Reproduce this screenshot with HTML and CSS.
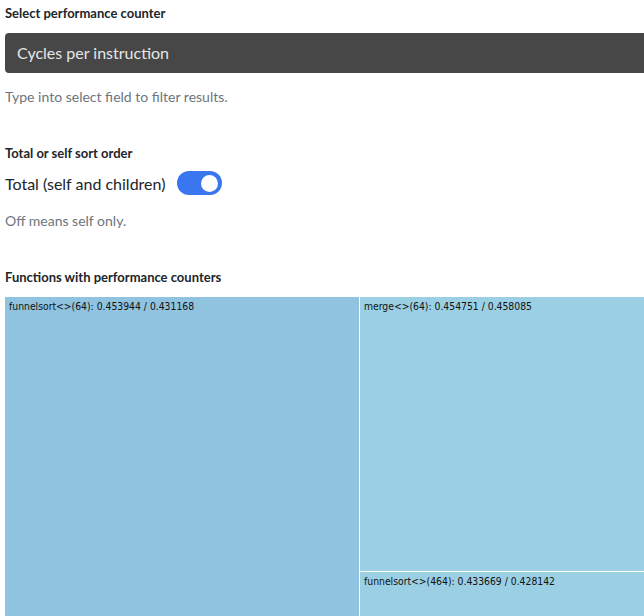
FILE: index.html
```html
<!DOCTYPE html>
<html>
<head>
<meta charset="utf-8">
<link rel="stylesheet" href="styles.css">
</head>
<body>
<div class="page">
  <div class="field">
    <div class="label">Select performance counter</div>
    <div class="select">Cycles per instruction</div>
    <div class="help">Type into select field to filter results.</div>
  </div>
  <div class="field sort">
    <div class="label">Total or self sort order</div>
    <div class="toggle-row">
      <span class="toggle-text">Total (self and children)</span>
      <span class="switch"><span class="knob"></span></span>
    </div>
    <div class="help">Off means self only.</div>
  </div>
  <div class="label funcs">Functions with performance counters</div>
  <div class="treemap">
    <div class="cell big">funnelsort&lt;&gt;(64): 0.453944 / 0.431168</div>
    <div class="col">
      <div class="cell light top">merge&lt;&gt;(64): 0.454751 / 0.458085</div>
      <div class="cell light bottom">funnelsort&lt;&gt;(464): 0.433669 / 0.428142</div>
    </div>
  </div>
</div>
</body>
</html>
```
FILE: styles.css
```css
html, body {
  margin: 0;
  padding: 0;
  background: #fff;
  overflow: hidden;
}
body {
  font-family: "Lato", "Open Sans", sans-serif;
  color: #212529;
}
.page {
  width: 639px;
  padding: 5px 0 0 5px;
}
.label {
  font-size: 13px;
  font-weight: 700;
  line-height: 17px;
  color: #212529;
}
.select {
  margin-top: 11px;
  height: 40px;
  background: #474747;
  border-radius: 4px 0 0 4px;
  color: #e6e6e6;
  font-size: 16px;
  line-height: 40px;
  padding-left: 12px;
}
.help {
  margin-top: 15px;
  font-size: 14px;
  line-height: 18px;
  color: #6c757d;
}
.sort {
  margin-top: 39px;
}
.toggle-row {
  margin-top: 9px;
  display: flex;
  align-items: center;
  height: 24px;
}
.toggle-text {
  font-size: 16px;
  color: #212529;
}
.switch {
  margin-left: 12px;
  width: 45px;
  height: 24px;
  border-radius: 12px;
  background: #3a76f0;
  display: flex;
  align-items: center;
  justify-content: flex-end;
  padding-right: 4px;
  box-sizing: border-box;
}
.knob {
  width: 17px;
  height: 17px;
  border-radius: 50%;
  background: #fff;
}
.sort .help {
  margin-top: 17px;
}
.funcs {
  margin-top: 39px;
}
.treemap {
  margin-top: 11px;
  display: flex;
  height: 330px;
  font-family: "DejaVu Sans Condensed", "DejaVu Sans", sans-serif;
  font-size: 10.3px;
  color: #111;
}
.cell {
  box-sizing: border-box;
  padding: 3px 4px;
  line-height: 12px;
}
.big {
  width: 354px;
  background: #8fc3df;
}
.col {
  flex: 1;
  display: flex;
  flex-direction: column;
  border-left: 1px solid #fff;
}
.light {
  background: #9bcfe3;
}
.top {
  height: 274px;
}
.bottom {
  flex: 1;
  border-top: 1px solid #fff;
}
```
